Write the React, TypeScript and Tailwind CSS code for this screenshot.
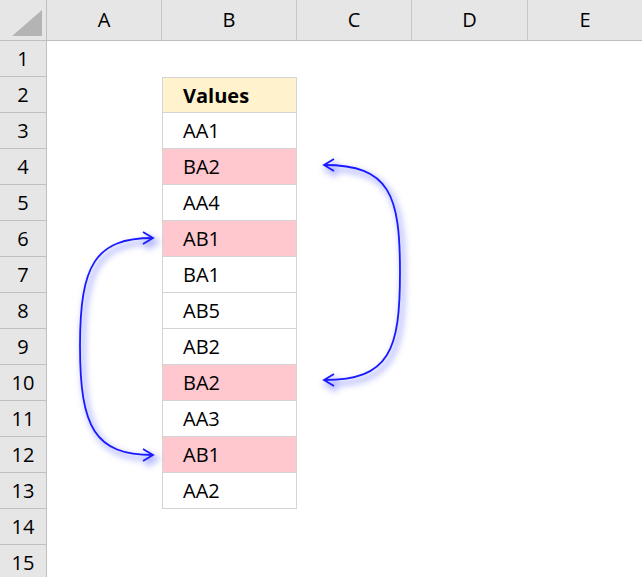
import React from "react";

const cols = [
  { n: "A", w: 115 },
  { n: "B", w: 135 },
  { n: "C", w: 115 },
  { n: "D", w: 116 },
  { n: "E", w: 115 },
];
const vals: Record<number, [string, string]> = {
  2: ["Values", "bg-[#fff2cc] font-bold"],
  3: ["AA1", "bg-white"],
  4: ["BA2", "bg-[#ffc7ce]"],
  5: ["AA4", "bg-white"],
  6: ["AB1", "bg-[#ffc7ce]"],
  7: ["BA1", "bg-white"],
  8: ["AB5", "bg-white"],
  9: ["AB2", "bg-white"],
  10: ["BA2", "bg-[#ffc7ce]"],
  11: ["AA3", "bg-white"],
  12: ["AB1", "bg-[#ffc7ce]"],
  13: ["AA2", "bg-white"],
};

export default function App() {
  const rows = Array.from({ length: 15 }, (_, i) => i + 1);
  return (
    <div className="relative w-[642px] h-[577px] overflow-hidden bg-white text-[20px] text-black" style={{ fontFamily: '"Open Sans", "Liberation Sans", sans-serif' }}>
      <div className="flex h-[41px] bg-[#e6e6e6] border-b border-[#bfbfbf]">
        <div className="w-[47px] shrink-0 border-r border-[#bfbfbf] relative">
          <div className="absolute right-[4px] bottom-[4px] w-0 h-0 border-l-[30px] border-l-transparent border-b-[26px] border-b-[#b4b4b4]" />
        </div>
        {cols.map((c) => (
          <div key={c.n} style={{ width: c.w }} className="shrink-0 border-r border-[#c8c8c8] flex items-center justify-center">{c.n}</div>
        ))}
      </div>
      {rows.map((r) => (
        <div key={r} className="flex h-[36px]">
          <div className="w-[47px] shrink-0 bg-[#e6e6e6] border-r border-b border-[#bfbfbf] flex items-center justify-center">{r}</div>
          <div className="w-[115px] shrink-0" />
          {vals[r] ? (
            <div className={`w-[135px] shrink-0 border border-[#d4d4d4] -mt-px ${r === 2 ? "mt-0" : ""} h-[37px] flex items-center pl-[20px] ${vals[r][1]}`}>{vals[r][0]}</div>
          ) : (
            <div className="w-[135px] shrink-0" />
          )}
        </div>
      ))}
      <svg className="absolute left-0 top-0" width="642" height="577">
        <defs>
          <filter id="g" x="-50%" y="-50%" width="200%" height="200%">
            <feGaussianBlur stdDeviation="3" />
          </filter>
        </defs>
        {[0, 1].map((k) => (
          <g key={k} stroke={k === 0 ? "#9aa0ff" : "#1a1aff"} strokeWidth={k === 0 ? 5 : 1.8} fill="none" filter={k === 0 ? "url(#g)" : undefined} transform={k === 0 ? "translate(3,4)" : undefined} opacity={k === 0 ? 0.7 : 1}>
            <path d="M324 165 C 390 165, 400 195, 400 272 C 400 350, 390 380, 324 380" />
            <path d="M334 159 L324 165 L334 171 M334 374 L324 380 L334 386" />
            <path d="M153 238 C 95 238, 80 265, 80 346 C 80 428, 95 455, 153 455" />
            <path d="M143 232 L153 238 L143 244 M143 449 L153 455 L143 461" />
          </g>
        ))}
      </svg>
    </div>
  );
}
